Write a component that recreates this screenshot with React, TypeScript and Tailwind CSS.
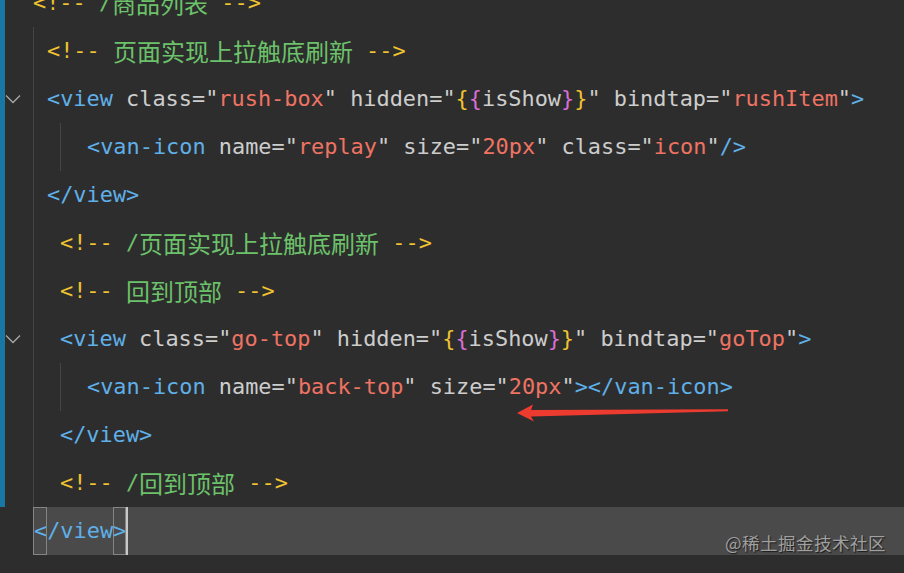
import React from "react";

type Tok = [string, string];

const T = "text-[#5fb0e8]";
const A = "text-[#cdcdcd]";
const S = "text-[#ef7363]";
const Y = "text-[#f0c330]";
const P = "text-[#d96fd6]";
const G = "text-[#6cc26a]";
const C = "cjk";

function Token({ t }: { t: Tok }) {
  if (t[1] === C) {
    return (
      <span className="text-[#6cc26a] font-['Noto_Sans_CJK_SC',sans-serif] text-[24px] leading-[48px]">
        {t[0]}
      </span>
    );
  }
  return <span className={t[1]}>{t[0]}</span>;
}

function Line({ toks }: { toks: Tok[] }) {
  return (
    <div className="h-[48px] leading-[48px] whitespace-pre flex items-center">
      {toks.map((t, i) => (
        <Token key={i} t={t} />
      ))}
    </div>
  );
}

function Chevron() {
  return (
    <svg width="16" height="10" viewBox="0 0 16 10" className="block">
      <polyline points="1,1.5 8,8.5 15,1.5" fill="none" stroke="#a8a8a8" strokeWidth="1.3" />
    </svg>
  );
}

function Gutter({ fold, bar = true }: { fold?: boolean; bar?: boolean }) {
  return (
    <div className={`w-[33px] shrink-0 h-[48px] flex ${bar ? "border-l-[5px] border-[#1878a3]" : ""}`}>
      <div className="flex-1 flex items-center">{fold ? <Chevron /> : null}</div>
    </div>
  );
}

const viewLine = (cls: string, fn: string): Tok[] => [
  ["<view", T],
  [" class=\"", A],
  [cls, S],
  ["\" hidden=\"", A],
  ["{", Y],
  ["{", P],
  ["isShow", A],
  ["}", P],
  ["}", Y],
  ["\" bindtap=\"", A],
  [fn, S],
  ["\"", A],
  [">", T],
];

export default function App() {
  return (
    <div className="relative w-[904px] h-[573px] overflow-hidden bg-[#2d2d2d] font-['DejaVu_Sans_Mono','Noto_Sans_CJK_SC',monospace] text-[21.9px]">
      <div className="-mt-[21px] flex flex-col">
        {/* line 0 */}
        <div className="flex">
          <Gutter />
          <Line toks={[["<!-- ", Y], ["/", G], ["商品列表", C], [" -->", Y]]} />
        </div>
        {/* lines 1-10 */}
        <div className="flex">
          <div className="flex flex-col">
            <Gutter />
            <Gutter fold />
            <Gutter />
            <Gutter />
            <Gutter />
            <Gutter />
            <Gutter fold />
            <Gutter />
            <Gutter />
            <Gutter />
          </div>
          <div className="flex-1 flex flex-col border-l border-[#454545]">
            <div className="pl-[13px]">
              <Line toks={[["<!-- ", Y], ["页面实现上拉触底刷新", C], [" -->", Y]]} />
              <Line toks={viewLine("rush-box", "rushItem")} />
            </div>
            <div className="ml-[26px] border-l border-[#454545] pl-[26px]">
              <Line
                toks={[
                  ["<van-icon", T],
                  [" name=\"", A],
                  ["replay", S],
                  ["\" size=\"", A],
                  ["20px", S],
                  ["\" class=\"", A],
                  ["icon", S],
                  ["\"", A],
                  ["/>", T],
                ]}
              />
            </div>
            <div className="pl-[13px]">
              <Line toks={[["</view>", T]]} />
            </div>
            <div className="pl-[26px]">
              <Line toks={[["<!-- ", Y], ["/", G], ["页面实现上拉触底刷新", C], [" -->", Y]]} />
              <Line toks={[["<!-- ", Y], ["回到顶部", C], [" -->", Y]]} />
              <Line toks={viewLine("go-top", "goTop")} />
            </div>
            <div className="ml-[26px] border-l border-[#454545] pl-[26px]">
              <Line
                toks={[
                  ["<van-icon", T],
                  [" name=\"", A],
                  ["back-top", S],
                  ["\" size=\"", A],
                  ["20px", S],
                  ["\"", A],
                  ["></van-icon>", T],
                ]}
              />
            </div>
            <div className="pl-[26px]">
              <Line toks={[["</view>", T]]} />
              <Line toks={[["<!-- ", Y], ["/", G], ["回到顶部", C], [" -->", Y]]} />
            </div>
          </div>
        </div>
        {/* line 11 */}
        <div className="flex">
          <div className="w-[33px] shrink-0 h-[48px]" />
          <div className="flex-1 h-[48px] bg-[#4a4a4a] flex items-stretch whitespace-pre leading-[48px] text-[#5fb0e8]">
            <span className="shadow-[inset_0_0_0_1px_#858585] pl-px">{"<"}</span>
            <span>{"/view"}</span>
            <span className="shadow-[inset_0_0_0_1px_#858585]">{">"}</span>
            <span className="w-[2px] bg-[#c8c8c8]" />
          </div>
        </div>
      </div>

      {/* red arrow annotation */}
      <svg className="absolute left-0 top-0 pointer-events-none" width="904" height="573" viewBox="0 0 904 573">
        <polygon
          points="517,413 533,404.5 531,410 728,409.3 728,411.3 531,416.5 534,421.5"
          fill="#ee3b30"
        />
      </svg>

      {/* watermark */}
      <div className="absolute right-[18px] top-[531px] text-[17.5px] tracking-[0.5px] leading-[24px] text-[#a0a0a0] font-['Noto_Sans_CJK_SC',sans-serif] [text-shadow:1px_1px_1px_#1a1a1a]">
        @稀土掘金技术社区
      </div>
    </div>
  );
}
